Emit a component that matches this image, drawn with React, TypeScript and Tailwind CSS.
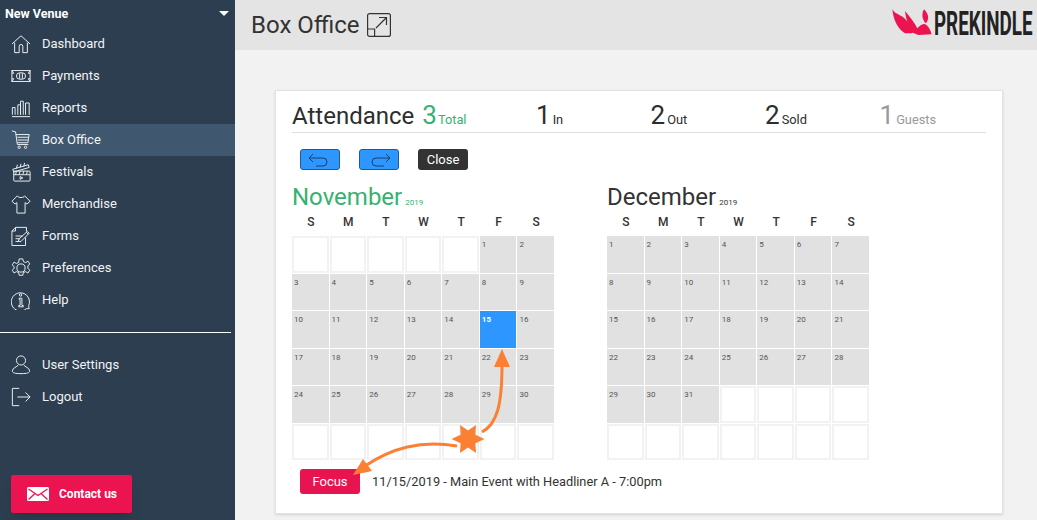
import React from "react";

const I = ({ children }: { children: React.ReactNode }) => (
  <svg width="20" height="20" viewBox="0 0 22 22" fill="none" stroke="#e8ecef" strokeWidth="1.100" className="shrink-0">
    {children}
  </svg>
);

const icons: Record<string, React.ReactNode> = {
  Dashboard: <I><path d="M1 11 11 2l10 9M4 9.500V20.500h5v-7a2 2 0 0 1 4 0v7h5V9.500" /></I>,
  Payments: <I><rect x="1" y="5" width="20" height="12" /><rect x="6" y="7.500" width="10" height="7" rx="3.500" /><path d="M9.500 8v6M12.500 8v6M1 8h2l-2-3M21 8h-2l2-3M1 14h2l-2 3M21 14h-2l2 3" /></I>,
  Reports: <I><path d="M1 20.500h20M1.500 18.500v-8h3v8M7.500 18.500v-11h3v11M10.500 18.500v-15h3v15M16 18.500v-13h4v13" /></I>,
  "Box Office": <I><path d="M1 1l4 1 2 14h12M5.500 5H20l-1.500 9H7M7 8h12M7.500 11h11" /><circle cx="9" cy="19" r="1.300" /><circle cx="16" cy="19" r="1.300" /></I>,
  Festivals: <I><rect x="3" y="10" width="18" height="11" rx="1" /><path d="M3 14h18M6 10l-1 4M10 10l-1 4M14 10l-1 4M18 10l-1 4M2 8l17-5 1 3-17 5zM6 7l1-4 M10 6l1-4M14 5l1-4M10 16v3l3-1.500z" /></I>,
  Merchandise: <I><path d="M7 2 1 8l3.500 3 2-1.500V21h9V9.500l2 1.500L21 8l-6-6c-1 2.500-7 2.500-8 0z" /></I>,
  Forms: <I><path d="M5 1.500h12V6M5 1.500 1 5.500v16h15v-9M1 5.500h4v-4M5 11h8M5 14h5M5 17h3M8 17l1-3 9-8 2 2-9 9zM17 7l2 2" /></I>,
  Preferences: <I><circle cx="11" cy="11" r="4.500" /><path d="M9 1h4l.6 3 2.500 1 2.500-1.500 2 3-2 2.200v2.600l2 2.200-2 3-2.500-1.500-2.500 1-.6 3H9l-.6-3-2.500-1-2.500 1.500-2-3 2-2.200V9.700l-2-2.200 2-3 2.500 1.500 2.500-1z" /></I>,
  Help: <I><path d="M20 20.500h-3a10 10 0 1 1 2.500-3.500q0 2 .5 3.500z" /><circle cx="10.500" cy="5.500" r="1.300" /><path d="M9 9h3v8h1.500v1.500h-5V17H10v-6.500H9z" /></I>,
  "User Settings": <I><circle cx="11" cy="6" r="5" /><path d="M8 11c-1 2-6.500 3-6.500 6.500 0 2 2.500 3 9.500 3s9.500-1 9.500-3C20.500 14 15 13 14 11" /></I>,
  Logout: <I><path d="M9 1.500H1.500v19H9M7 11h14M16 6l5 5-5 5" /></I>,
};

const NavItem = ({ label, active }: { label: string; active?: boolean }) => (
  <div className={`flex h-8 items-center gap-[11px] pl-[11px] text-[13px] text-[#f1f3f5] ${active ? "bg-[#3f586f]" : ""}`}>
    {icons[label]}
    <span>{label}</span>
  </div>
);

const Stat = ({ n, label, muted }: { n: number; label: string; muted?: boolean }) => (
  <div className={`flex w-[114.500px] shrink-0 items-baseline gap-[2px] last:w-auto ${muted ? "text-[#999]" : "text-[#2d2d2d]"}`}>
    <span className="text-[26px] leading-none">{n}</span>
    <span className="text-[12.800px]">{label}</span>
  </div>
);

const Month = ({ name, green, lead, days, width }: { name: string; green?: boolean; lead: number; days: number; width: string }) => {
  const cells: (number | null)[] = [];
  for (let i = 0; i < lead; i++) cells.push(null);
  for (let d = 1; d <= days; d++) cells.push(d);
  while (cells.length < 42) cells.push(null);
  return (
    <div className={width}>
      <div className={`flex h-[28px] items-baseline gap-[3px] ${green ? "text-[#36b270]" : "text-[#333]"}`}>
        <span className="text-[24px] leading-[28px]">{name}</span>
        <span className="text-[8px]">2019</span>
      </div>
      <div className="grid w-[263px] grid-cols-7 pt-[4px] pb-[7px] text-center text-[12px] font-medium leading-[14px] text-[#333]">
        {["S", "M", "T", "W", "T", "F", "S"].map((d, i) => (
          <div key={i}>{d}</div>
        ))}
      </div>
      <div className="grid w-[263px] grid-cols-7 auto-rows-[37.500px]">
        {cells.map((c, i) =>
          c === null ? (
            <div key={i} className="border-b border-r border-white">
              <div className="h-full w-full border-2 border-[#f2f2f2] bg-white" />
            </div>
          ) : (
            <div
              key={i}
              className={`border-b border-r border-white pl-[2px] pt-[3px] text-[8px] leading-[12px] ${
                c === 15 && green ? "bg-[#2d97ff] font-bold text-white" : "bg-[#e1e1e1] text-[#555]"
              }`}
            >
              {c}
            </div>
          )
        )}
      </div>
    </div>
  );
};

export default function App() {
  return (
    <div className="relative flex h-[520px] w-[1037px] overflow-hidden bg-[#f2f2f2] font-['Roboto',sans-serif]">
      <aside className="flex w-[235px] shrink-0 flex-col bg-[#2c3e50]">
        <div className="flex h-7 items-center justify-between pl-[5px] pr-[6px] text-[12.500px] font-bold text-white">
          <span>New Venue</span>
          <span className="mb-[2px] h-0 w-0 border-x-[5px] border-t-[5px] border-x-transparent border-t-white" />
        </div>
        {["Dashboard", "Payments", "Reports"].map((l) => (
          <NavItem key={l} label={l} />
        ))}
        <NavItem label="Box Office" active />
        {["Festivals", "Merchandise", "Forms", "Preferences", "Help"].map((l) => (
          <NavItem key={l} label={l} />
        ))}
        <div className="mb-4 mt-[16px] h-px w-[231px] bg-white" />
        <NavItem label="User Settings" />
        <NavItem label="Logout" />
        <div className="mt-auto mb-[7px] ml-[11px] flex h-[38px] w-[121px] items-center gap-[10px] rounded-[2px] bg-[#ec1450] pl-4 text-[12px] font-bold text-white shadow-lg">
          <svg width="22" height="14" viewBox="0 0 22 14" className="shrink-0">
            <rect width="22" height="14" rx="1.500" fill="#fff" />
            <path d="M1.500 2 11 8.500 20.500 2M1.500 12.500 8 6.500M20.500 12.500 14 6.500" fill="none" stroke="#ec1450" strokeWidth="1.300" />
          </svg>
          <span>Contact us</span>
        </div>
      </aside>

      <main className="flex min-w-0 flex-1 flex-col">
        <header className="flex h-[50px] shrink-0 items-center bg-[#e4e4e4] pl-[16px] pr-[5px] text-[#333]">
          <span className="text-[24px]">Box Office</span>
          <svg width="24" height="24" viewBox="0 0 24 24" fill="none" stroke="#333" strokeWidth="1.200" className="ml-[7px]">
            <rect x="0.600" y="0.600" width="22.800" height="22.800" rx="2" />
            <path d="M0.600 16h7v7.400M9 15 19 5M12 4.500h7.500V12" />
          </svg>
          <div className="mb-[7px] ml-auto flex items-center gap-[2px]">
            <svg width="40" height="27" viewBox="96 24 120 81" fill="#ec1450">
              <path d="M97 27C105 45 125 42 140 62 152 78 155 90 158 100L135 100C118 90 100 65 97 27Z" />
              <path d="M115 62C125 85 150 95 175 105L215 103C212 90 205 78 195 72 185 72 178 78 172 85 165 70 150 50 135 33 137 55 145 75 150 90 135 85 125 75 115 62Z" />
              <path d="M192 28C207 42 208 60 197 70 186 58 184 42 192 28Z" />
            </svg>
            <span className="mt-[3px] block w-[98px] origin-left scale-x-[0.57] whitespace-nowrap text-[33px] font-bold leading-none text-[#222]">PREKINDLE</span>
          </div>
        </header>

        <div className="flex-1 pl-[40px] pr-[34px] pt-[40px]">
          <section className="relative h-[424px] border border-[#e2e2e2] bg-white px-[16px] pt-[11px] shadow-sm">
            <div className="flex h-[31px] items-baseline border-b border-[#ddd] text-[#2d2d2d]">
              <div className="flex w-[244px] shrink-0 items-baseline">
                <span className="text-[24px] leading-none">Attendance</span>
                <span className="ml-[8px] text-[26px] leading-none text-[#36b270]">3</span>
                <span className="ml-[1px] text-[12.800px] text-[#36b270]">Total</span>
              </div>
              <Stat n={1} label="In" />
              <Stat n={2} label="Out" />
              <Stat n={2} label="Sold" />
              <Stat n={1} label="Guests" muted />
            </div>

            <div className="ml-[8px] mt-[16px] flex gap-[19px]">
              {["M7 3 3 7l4 4M3 7h14a4 4 0 0 1 0 8H10", "M21 3l4 4-4 4M25 7H11a4 4 0 0 0 0 8h8"].map((d) => (
                <button key={d} className="flex h-[21px] w-[40px] items-center justify-center rounded-[3px] border border-[#1f5a94] bg-[#2d97ff]">
                  <svg width="28" height="17" viewBox="0 0 28 17" fill="none" stroke="#1d3f66" strokeWidth="1">
                    <path d={d} />
                  </svg>
                </button>
              ))}
              <button className="h-[21px] w-[50px] rounded-[3px] bg-[#333] text-[13px] text-white">Close</button>
            </div>

            <div className="mt-[13px] flex">
              <Month name="November" green lead={5} days={30} width="w-[315px]" />
              <Month name="December" lead={0} days={31} width="w-[263px]" />
            </div>

            <div className="ml-[8px] mt-[8px] flex items-center gap-[12px] text-[12.800px] text-[#333]">
              <button className="h-[25px] w-[60px] rounded-[3px] bg-[#e8144f] text-[13px] text-white">Focus</button>
              <span>11/15/2019 - Main Event with Headliner A - 7:00pm</span>
            </div>

            <svg width="728" height="424" viewBox="275 90 728 424" fill="none" className="pointer-events-none absolute -left-px -top-px">
              <path d="M482 432C497 424 502 405 502 365" stroke="#fb8033" strokeWidth="3" />
              <path d="M502 349 494 367H510Z" fill="#fb8033" />
              <path d="M457 446C420 440 392 448 365 466" stroke="#fb8033" strokeWidth="3" />
              <path d="M353 475 363 459 372 471Z" fill="#fb8033" />
              <path d="M484.500 439 475.400 443.200 476 453 468 447.500 460 453 460.600 443.200 451.500 439 460.600 434.800 460 425 468 430.500 476 425 475.400 434.800Z" fill="#fb8033" />
            </svg>
          </section>
        </div>
      </main>
    </div>
  );
}
